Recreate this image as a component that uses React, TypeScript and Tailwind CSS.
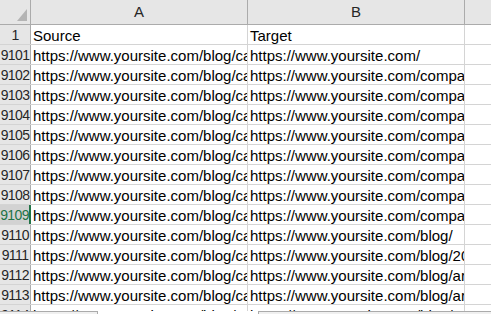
import React from 'react';

const rows: [string, string, string][] = [
  ['9101', 'https://www.yoursite.com/blog/category/', 'https://www.yoursite.com/'],
  ['9102', 'https://www.yoursite.com/blog/category/', 'https://www.yoursite.com/company/'],
  ['9103', 'https://www.yoursite.com/blog/category/', 'https://www.yoursite.com/company/'],
  ['9104', 'https://www.yoursite.com/blog/category/', 'https://www.yoursite.com/company/'],
  ['9105', 'https://www.yoursite.com/blog/category/', 'https://www.yoursite.com/company/'],
  ['9106', 'https://www.yoursite.com/blog/category/', 'https://www.yoursite.com/company/'],
  ['9107', 'https://www.yoursite.com/blog/category/', 'https://www.yoursite.com/company/'],
  ['9108', 'https://www.yoursite.com/blog/category/', 'https://www.yoursite.com/company/'],
  ['9109', 'https://www.yoursite.com/blog/category/', 'https://www.yoursite.com/company/'],
  ['9110', 'https://www.yoursite.com/blog/category/', 'https://www.yoursite.com/blog/'],
  ['9111', 'https://www.yoursite.com/blog/category/', 'https://www.yoursite.com/blog/2019/'],
  ['9112', 'https://www.yoursite.com/blog/category/', 'https://www.yoursite.com/blog/archive/'],
  ['9113', 'https://www.yoursite.com/blog/category/', 'https://www.yoursite.com/blog/archive/'],
  ['9114', 'https://www.yoursite.com/blog/category/', 'https://www.yoursite.com/blog/archive/'],
];

const Cell: React.FC<{ w: string; children?: React.ReactNode }> = ({ w, children }) => (
  <div className={`${w} shrink-0 h-full border-r border-[#d4d4d4] overflow-hidden whitespace-nowrap pl-[2px] pt-[1px]`}>
    {children}
  </div>
);

const RowHead: React.FC<{ n: string; active?: boolean }> = ({ n, active }) => (
  <div
    className={
      active
        ? 'w-[31px] shrink-0 h-full bg-[#d2d2d2] text-[#217346] border-r-2 border-[#217346] flex justify-center overflow-hidden pt-[1px] text-[14px] tracking-[-0.6px]'
        : 'w-[31px] shrink-0 h-full bg-[#e6e6e6] text-[#262626] border-r border-[#ababab] flex justify-center overflow-hidden pt-[1px] text-[14px] tracking-[-0.6px]'
    }
  >
    <span className="whitespace-nowrap">{n}</span>
  </div>
);

const App: React.FC = () => {
  return (
    <div
      className="relative w-[491px] h-[314px] overflow-hidden bg-white text-black text-[15px] leading-[19px]"
      style={{ fontFamily: '"Liberation Sans", Arial, sans-serif' }}
    >
      {/* column headers */}
      <div className="flex h-[25px] bg-[#e6e6e6] border-b border-[#ababab] text-[#262626]">
        <div className="w-[31px] shrink-0 h-full border-r border-[#ababab] relative">
          <svg className="absolute left-[16px] top-[8px]" width="12" height="14" viewBox="0 0 12 14">
            <polygon points="11,1 11,13 1,13" fill="#b4b4b4" />
          </svg>
        </div>
        <div className="w-[217px] shrink-0 h-full border-r border-[#ababab] flex items-end justify-center pb-[3px]">A</div>
        <div className="w-[217px] shrink-0 h-full border-r border-[#ababab] flex items-end justify-center pb-[3px]">B</div>
        <div className="flex-1" />
      </div>

      {/* row 1 */}
      <div className="flex h-[20px] border-b border-[#d4d4d4]">
        <RowHead n="1" />
        <Cell w="w-[217px]">Source</Cell>
        <Cell w="w-[217px]">Target</Cell>
        <div className="flex-1" />
      </div>

      {rows.map(([n, a, b]) => (
        <div key={n} className="flex h-[20px] border-b border-[#d4d4d4]">
          <RowHead n={n} active={n === '9109'} />
          <Cell w="w-[217px]">{a}</Cell>
          <Cell w="w-[217px]">{b}</Cell>
          <div className="flex-1" />
        </div>
      ))}

      {/* scroll / tab strip overlapping the last partial row */}
      <div className="absolute left-0 right-0 top-[311px] h-[3px] flex">
        <div className="w-[98px] h-full bg-[#f0f0f0] border-t border-r border-[#ababab]" />
        <div className="w-[160px] h-full bg-white" />
        <div className="flex-1 h-full bg-[#f0f0f0] border-t border-l border-[#ababab]" />
      </div>
    </div>
  );
};

export default App;
